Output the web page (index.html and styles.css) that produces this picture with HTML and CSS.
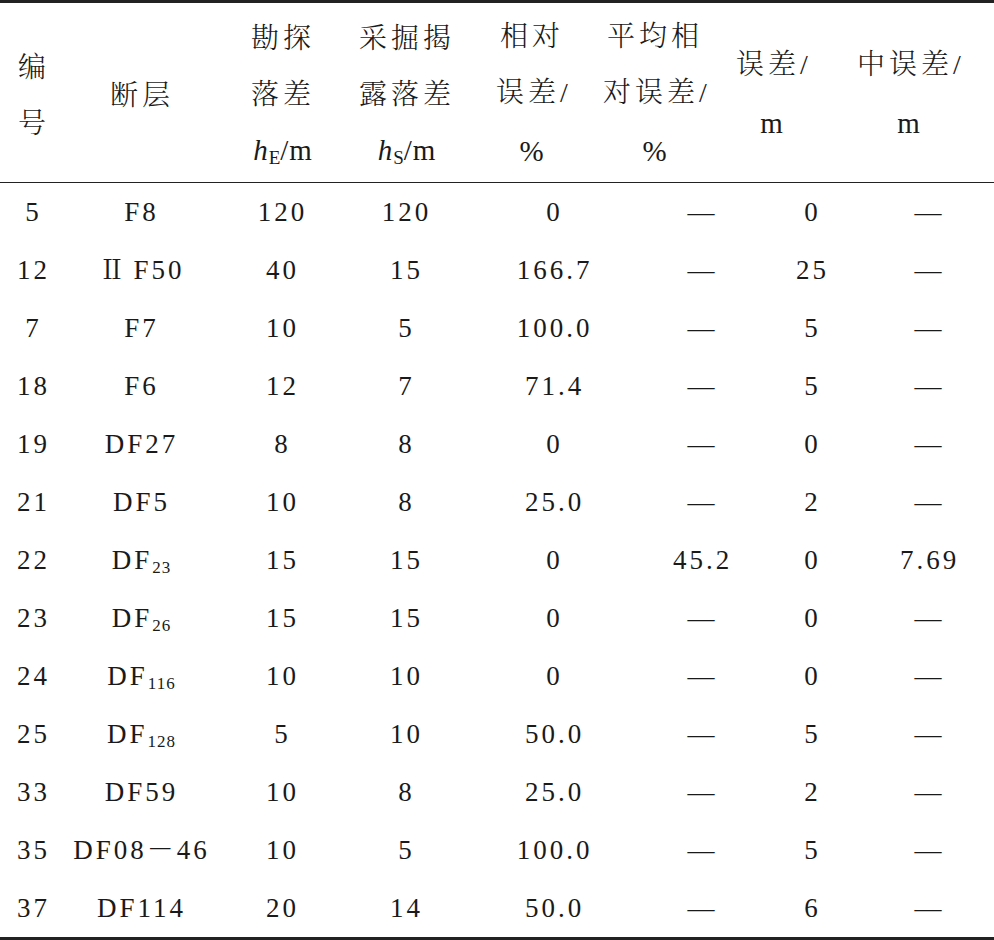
FILE: index.html
```html
<!DOCTYPE html>
<html lang="zh">
<head>
<meta charset="utf-8">
<title>断层落差误差表</title>
<link rel="stylesheet" href="styles.css">
</head>
<body>
<div class="tbl">
  <div class="head">
    <div class="hc">编<br>号</div>
    <div class="hc">断层</div>
    <div class="hc">勘探<br>落差<br><span class="lat"><i>h</i><sub>E</sub>/m</span></div>
    <div class="hc">采掘揭<br>露落差<br><span class="lat"><i>h</i><sub>S</sub>/m</span></div>
    <div class="hc">相对<br>误差<span class="sl">/</span><br><span class="pct">%</span></div>
    <div class="hc">平均相<br>对误差<span class="sl">/</span><br><span class="pct">%</span></div>
    <div class="hc">误差<span class="sl">/</span><br><span class="lat">m</span></div>
    <div class="hc c8">中误差<span class="sl">/</span><br><span class="lat">m</span></div>
  </div>
  <div class="rows">
    <div class="row"><span>5</span><span>F8</span><span>120</span><span>120</span><span>0</span><span class="d">—</span><span>0</span><span class="d">—</span></div>
    <div class="row"><span>12</span><span><span class="rn">Ⅱ</span>F50</span><span>40</span><span>15</span><span>166.7</span><span class="d">—</span><span>25</span><span class="d">—</span></div>
    <div class="row"><span>7</span><span>F7</span><span>10</span><span>5</span><span>100.0</span><span class="d">—</span><span>5</span><span class="d">—</span></div>
    <div class="row"><span>18</span><span>F6</span><span>12</span><span>7</span><span>71.4</span><span class="d">—</span><span>5</span><span class="d">—</span></div>
    <div class="row"><span>19</span><span>DF27</span><span>8</span><span>8</span><span>0</span><span class="d">—</span><span>0</span><span class="d">—</span></div>
    <div class="row"><span>21</span><span>DF5</span><span>10</span><span>8</span><span>25.0</span><span class="d">—</span><span>2</span><span class="d">—</span></div>
    <div class="row"><span>22</span><span>DF<sub>23</sub></span><span>15</span><span>15</span><span>0</span><span>45.2</span><span>0</span><span>7.69</span></div>
    <div class="row"><span>23</span><span>DF<sub>26</sub></span><span>15</span><span>15</span><span>0</span><span class="d">—</span><span>0</span><span class="d">—</span></div>
    <div class="row"><span>24</span><span>DF<sub>116</sub></span><span>10</span><span>10</span><span>0</span><span class="d">—</span><span>0</span><span class="d">—</span></div>
    <div class="row"><span>25</span><span>DF<sub>128</sub></span><span>5</span><span>10</span><span>50.0</span><span class="d">—</span><span>5</span><span class="d">—</span></div>
    <div class="row"><span>33</span><span>DF59</span><span>10</span><span>8</span><span>25.0</span><span class="d">—</span><span>2</span><span class="d">—</span></div>
    <div class="row"><span>35</span><span>DF08－46</span><span>10</span><span>5</span><span>100.0</span><span class="d">—</span><span>5</span><span class="d">—</span></div>
    <div class="row"><span>37</span><span>DF114</span><span>20</span><span>14</span><span>50.0</span><span class="d">—</span><span>6</span><span class="d">—</span></div>
  </div>
</div>
</body>
</html>
```

FILE: styles.css
```css
html, body {
  margin: 0;
  padding: 0;
  background: #fff;
}
body {
  width: 994px;
  height: 940px;
  overflow: hidden;
  color: #1a1a1a;
  font-family: "Liberation Serif", "Noto Serif CJK SC", "Noto Sans CJK SC", serif;
}
.tbl {
  width: 994px;
  border-top: 3px solid #222;
  border-bottom: 3px solid #222;
}
.head {
  display: grid;
  grid-template-columns: 64px 152px 130px 118px 132px 114px 120px 164px;
  height: 180px;
  align-items: center;
  border-bottom: 1.5px solid #222;
  box-sizing: border-box;
}
.hc {
  text-align: center;
  font-family: "Noto Serif CJK SC", "Noto Sans CJK SC", serif;
  font-size: 28px;
  font-weight: 300;
  line-height: 56px;
  letter-spacing: 4px;
  padding-left: 4px;
}
.hc.c8 {
  padding-left: 0;
  padding-right: 6px;
}
.hc .lat, .hc .pct {
  font-family: "Liberation Serif", serif;
  font-size: 29px;
  font-weight: 400;
  letter-spacing: 1px;
}
.hc .sl {
  font-family: "Liberation Serif", serif;
  font-weight: 300;
  letter-spacing: 0;
}
.hc sub {
  font-size: 19px;
  line-height: 0;
  vertical-align: -4px;
  letter-spacing: 0;
}
.rows {
  display: flex;
  flex-direction: column;
}
.row {
  display: grid;
  grid-template-columns: 64px 152px 130px 118px 178px 118px 102px 132px;
  height: 58px;
  align-items: center;
  font-size: 27px;
  line-height: 58px;
  letter-spacing: 3px;
}
.row > span {
  text-align: center;
  padding-left: 3px;
  white-space: nowrap;
}
.row sub {
  font-size: 17px;
  line-height: 0;
  vertical-align: -4px;
  letter-spacing: 1px;
}
.row .d {
  letter-spacing: 0;
  padding-left: 0;
}
.row .rn {
  letter-spacing: 0;
  margin-right: 8px;
}
```
